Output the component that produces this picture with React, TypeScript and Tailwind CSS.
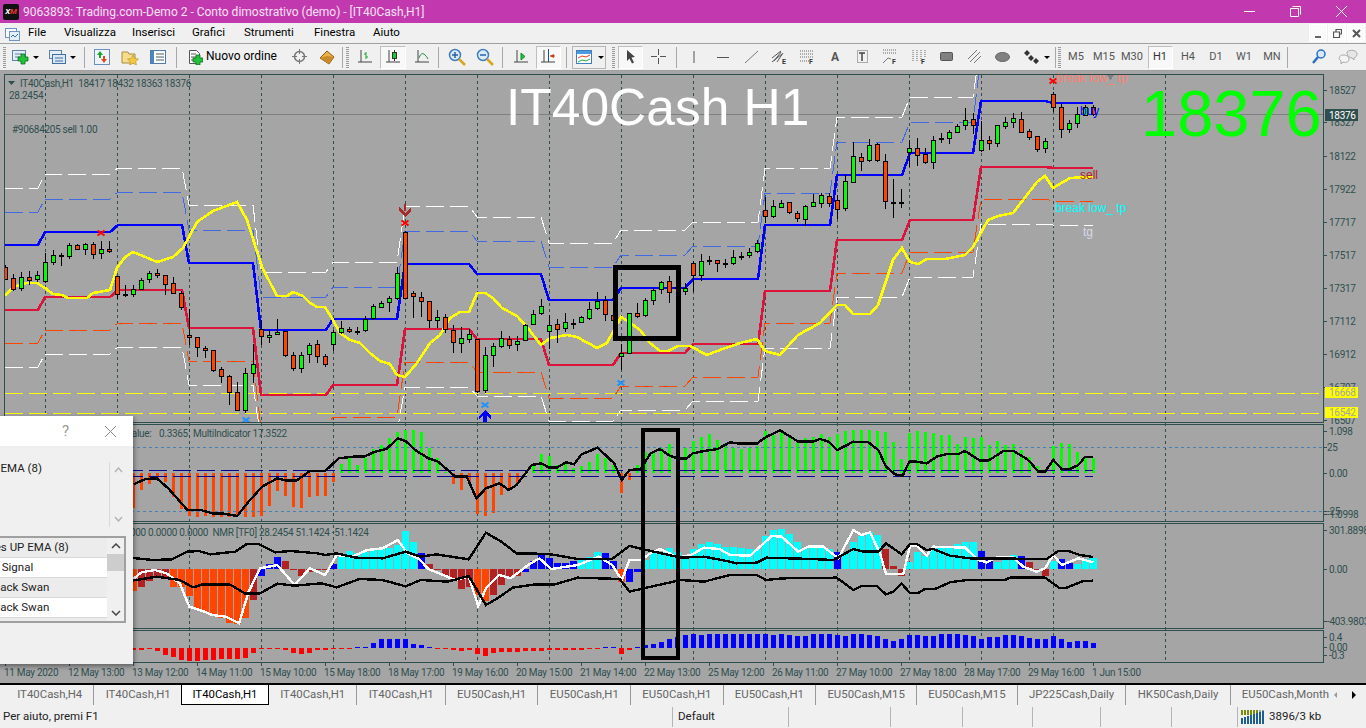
import { ReactNode } from 'react';

type Pt = [number, number];

// top, bottom, wick top, wick bottom, colour: one row per hourly bar, x = 5 + 8 * index
const candles: [number, number, number, number, string][] = [
  [267, 279, 265, 280, 'r'], [278, 289, 274, 291, 'r'], [277, 288, 272, 291, 'g'], [277, 280, 271, 285, 'r'], [275, 279, 271, 282, 'g'],
  [262, 281, 253, 283, 'g'], [255, 262, 250, 265, 'g'], [255, 256, 253, 266, 'd'], [245, 256, 243, 259, 'g'], [245, 249, 244, 250, 'r'],
  [244, 249, 243, 255, 'g'], [244, 254, 242, 259, 'r'], [249, 253, 241, 259, 'g'], [249, 251, 241, 253, 'r'], [276, 294, 276, 299, 'r'],
  [294, 295, 285, 297, 'd'], [289, 294, 285, 297, 'g'], [280, 289, 278, 290, 'g'], [273, 279, 271, 283, 'g'], [273, 275, 269, 278, 'r'],
  [275, 284, 275, 295, 'r'], [283, 293, 277, 294, 'r'], [293, 307, 291, 310, 'r'], [335, 337, 309, 345, 'r'], [337, 347, 337, 357, 'r'],
  [348, 350, 346, 358, 'r'], [350, 370, 350, 372, 'r'], [369, 376, 367, 383, 'r'], [376, 392, 375, 405, 'r'], [392, 410, 382, 411, 'r'],
  [373, 410, 368, 413, 'g'], [364, 373, 344, 383, 'g'], [329, 336, 320, 345, 'r'], [335, 337, 330, 343, 'g'], [332, 334, 319, 335, 'g'],
  [331, 355, 331, 357, 'r'], [355, 368, 352, 371, 'r'], [355, 368, 352, 373, 'g'], [345, 354, 343, 363, 'g'], [344, 356, 340, 363, 'r'],
  [356, 364, 354, 367, 'r'], [332, 344, 330, 351, 'g'], [328, 332, 321, 334, 'g'], [329, 331, 327, 333, 'r'], [331, 332, 327, 335, 'd'],
  [319, 330, 316, 332, 'g'], [306, 318, 304, 320, 'g'], [303, 307, 301, 308, 'g'], [298, 302, 296, 312, 'g'], [273, 298, 267, 300, 'g'],
  [232, 298, 231, 299, 'r'], [293, 296, 291, 318, 'r'], [297, 301, 292, 317, 'r'], [301, 320, 301, 328, 'r'], [317, 320, 310, 328, 'g'],
  [317, 329, 314, 333, 'r'], [330, 342, 325, 353, 'r'], [338, 343, 327, 353, 'g'], [334, 339, 329, 343, 'g'], [339, 391, 339, 393, 'r'],
  [355, 390, 347, 393, 'g'], [346, 355, 343, 367, 'g'], [338, 346, 331, 348, 'g'], [339, 345, 336, 349, 'r'], [341, 344, 336, 351, 'g'],
  [325, 340, 324, 341, 'g'], [314, 324, 310, 325, 'g'], [306, 313, 299, 315, 'g'], [325, 331, 315, 349, 'g'], [324, 329, 319, 343, 'r'],
  [322, 328, 313, 332, 'g'], [323, 324, 319, 329, 'd'], [317, 322, 316, 323, 'g'], [309, 318, 302, 320, 'g'], [301, 308, 292, 310, 'g'],
  [300, 314, 296, 321, 'r'], [315, 320, 310, 323, 'r'], [353, 356, 344, 370, 'g'], [313, 353, 313, 354, 'g'], [313, 316, 303, 318, 'r'],
  [300, 315, 298, 317, 'g'], [290, 300, 288, 305, 'g'], [282, 289, 281, 294, 'g'], [281, 292, 276, 303, 'r'], [287, 288, 285, 291, 'g'],
  [288, 291, 283, 295, 'g'], [263, 275, 261, 292, 'r'], [261, 275, 254, 281, 'g'], [260, 261, 256, 265, 'd'], [260, 263, 260, 272, 'r'],
  [263, 264, 259, 268, 'd'], [257, 263, 250, 265, 'g'], [256, 257, 252, 260, 'd'], [252, 255, 248, 258, 'g'], [243, 251, 240, 253, 'g'],
  [210, 216, 197, 223, 'r'], [206, 216, 200, 218, 'g'], [203, 207, 200, 208, 'g'], [202, 212, 202, 214, 'r'], [213, 218, 211, 222, 'r'],
  [206, 219, 205, 226, 'g'], [202, 206, 194, 206, 'g'], [195, 203, 193, 208, 'g'], [196, 203, 193, 207, 'r'], [200, 209, 195, 219, 'r'],
  [181, 208, 175, 211, 'g'], [156, 182, 142, 182, 'g'], [157, 161, 153, 171, 'r'], [145, 160, 139, 162, 'g'], [144, 160, 143, 162, 'r'],
  [161, 201, 154, 209, 'r'], [202, 203, 179, 218, 'd'], [202, 203, 189, 208, 'd'], [148, 152, 140, 167, 'g'], [148, 155, 138, 166, 'r'],
  [154, 162, 148, 164, 'r'], [140, 162, 136, 169, 'g'], [138, 139, 133, 143, 'd'], [132, 138, 130, 144, 'g'], [126, 132, 124, 133, 'g'],
  [120, 125, 108, 130, 'g'], [119, 125, 113, 134, 'r'], [140, 150, 121, 152, 'g'], [140, 143, 136, 150, 'r'], [125, 143, 125, 147, 'g'],
  [122, 126, 117, 129, 'g'], [118, 122, 113, 128, 'g'], [119, 132, 112, 132, 'r'], [131, 137, 129, 140, 'r'], [136, 149, 136, 152, 'r'],
  [141, 148, 138, 153, 'g'], [94, 107, 92, 112, 'r'], [107, 129, 104, 138, 'r'], [123, 129, 120, 133, 'g'], [114, 123, 107, 128, 'g'],
  [107, 115, 105, 116, 'g'], [107, 114, 105, 116, 'r'],
];

const segStart = [5, 45, 118, 189, 261, 333, 405, 477, 549, 621, 693, 765, 837, 910, 981, 1053];
const segEnd = [38, 110, 182, 253, 326, 397, 469, 541, 613, 685, 758, 830, 902, 973, 1045, 1093];

const blueLevel = [245, 232, 225, 263, 330, 319, 264, 274, 300, 288, 279, 225, 175, 153, 101, 103];
const redLevel = [310, 297, 290, 328, 395, 385, 329, 339, 365, 353, 344, 291, 240, 220, 167, 168];
const whiteTop = [188, 174, 168, 205, 272, 262, 206, 217, 243, 230, 222, 168, 117, 97, 40, 42];
const blueTop = [212, 199, 192, 230, 297, 287, 231, 241, 267, 255, 246, 193, 142, 122, 55, 56];
const orangeLow = [343, 330, 323, 361, 428, 417, 362, 372, 398, 386, 377, 323, 273, 252, 199, 201];
const whiteLow = [367, 354, 347, 385, 440, 432, 387, 396, 421, 410, 401, 348, 297, 277, 224, 225];

const yellowLine: Pt[] = [
  [5, 296], [13, 287], [27, 283], [37, 283], [45, 288], [53, 294], [62, 295], [68, 298], [87, 298], [93, 293], [110, 290], [117, 268],
  [125, 257], [133, 252], [143, 256], [157, 262], [173, 257], [183, 248], [197, 222], [213, 211], [237, 202], [247, 220], [262, 267],
  [277, 296], [287, 296], [293, 292], [303, 296], [310, 303], [317, 307], [325, 307], [333, 320], [340, 333], [350, 340], [360, 343],
  [370, 353], [380, 361], [390, 364], [397, 375], [405, 377], [417, 363], [430, 343], [440, 335], [450, 318], [460, 312], [469, 312],
  [477, 293], [485, 293], [493, 298], [502, 308], [517, 316], [527, 327], [541, 345], [550, 338], [567, 335], [577, 337], [597, 348],
  [607, 343], [621, 317], [629, 322], [640, 330], [650, 343], [660, 351], [668, 351], [678, 346], [690, 346], [707, 355], [720, 350],
  [740, 343], [757, 339], [765, 351], [780, 355], [798, 335], [820, 323], [837, 305], [845, 305], [853, 314], [870, 314], [878, 305],
  [893, 260], [902, 248], [910, 262], [918, 264], [927, 259], [945, 259], [965, 255], [973, 247], [988, 220], [998, 216], [1013, 213],
  [1037, 182], [1045, 176], [1053, 188], [1070, 178], [1093, 177],
];

// pane lines were read off two crops, so they keep the crop's own coordinates
const left = (pts: Pt[]): Pt[] => pts.map(([x, y]) => [130 + x / 2.613, 425 + y / 3]);
const right = (pts: Pt[]): Pt[] => pts.map(([x, y]) => [730 + x / 3, 425 + y / 3]);

const rsiLine = [
  ...left([[10, 178], [40, 162], [70, 160], [100, 190], [150, 255], [185, 255], [215, 265], [240, 265], [280, 273], [310, 230], [345, 185], [385, 160], [410, 167], [435, 167], [470, 138], [510, 138], [545, 100], [585, 95], [612, 95], [640, 80], [670, 72], [700, 40], [720, 48], [745, 75], [780, 100], [805, 110], [850, 155], [880, 155], [905, 220], [930, 190], [965, 175], [990, 195], [1010, 180], [1050, 120], [1075, 115], [1095, 128], [1115, 128], [1140, 112], [1160, 118], [1180, 88], [1222, 68], [1265, 115], [1285, 165], [1305, 135], [1335, 132], [1360, 85], [1385, 72], [1410, 92], [1430, 100], [1455, 100], [1470, 85], [1500, 78], [1535, 72]]),
  ...right([[0, 52], [30, 56], [80, 56], [110, 35], [150, 16], [205, 50], [250, 50], [270, 42], [295, 50], [322, 75], [370, 50], [415, 52], [445, 75], [468, 125], [495, 148], [518, 152], [538, 110], [560, 110], [590, 115], [620, 95], [650, 87], [685, 87], [705, 78], [750, 107], [775, 107], [820, 78], [850, 78], [895, 105], [925, 140], [945, 140], [970, 105], [995, 132], [1020, 132], [1045, 120], [1065, 96], [1090, 96]]),
];
const bandTop = [
  ...left([[0, 398], [60, 405], [110, 403], [150, 380], [180, 378], [210, 388], [275, 380], [305, 357], [335, 357], [380, 382], [420, 378], [490, 385], [510, 390], [540, 385], [590, 398], [660, 400], [720, 380], [760, 395], [800, 388], [885, 403], [930, 323], [970, 350], [1010, 385], [1040, 385], [1100, 388], [1170, 402], [1260, 402], [1305, 363], [1350, 375], [1440, 398], [1500, 395]]),
  ...right([[0, 410], [20, 415], [80, 413], [110, 398], [245, 402], [310, 405], [370, 372], [400, 380], [445, 380], [468, 355], [515, 388], [540, 357], [560, 357], [590, 375], [610, 372], [660, 392], [720, 400], [830, 400], [880, 402], [950, 402], [985, 378], [1015, 378], [1050, 390], [1090, 396]]),
];
const bandLow = [
  ...left([[0, 468], [70, 455], [130, 465], [165, 487], [190, 478], [260, 478], [300, 505], [340, 505], [385, 476], [430, 482], [500, 475], [540, 487], [600, 462], [660, 465], [720, 484], [760, 465], [830, 470], [885, 453], [930, 540], [960, 520], [1000, 488], [1060, 478], [1110, 478], [1170, 458], [1280, 462], [1305, 500], [1350, 488], [1440, 465], [1500, 470]]),
  ...right([[0, 450], [80, 450], [108, 465], [160, 460], [320, 458], [370, 495], [395, 483], [440, 483], [468, 508], [490, 500], [515, 476], [540, 504], [565, 504], [585, 492], [615, 492], [660, 472], [710, 465], [825, 465], [840, 458], [945, 458], [990, 490], [1010, 488], [1060, 468], [1090, 467]]),
];
const signalLine = [
  ...left([[0, 470], [30, 442], [65, 435], [95, 445], [130, 475], [155, 545], [190, 558], [215, 570], [250, 575], [285, 595], [310, 500], [340, 430], [385, 420], [430, 480], [470, 430], [510, 450], [540, 390], [580, 395], [620, 375], [660, 370], [700, 345], [725, 385], [755, 402], [780, 432], [850, 465], [885, 455], [910, 543], [930, 490], [965, 450], [995, 460], [1040, 420], [1070, 400], [1100, 432], [1170, 420], [1225, 395], [1260, 420], [1285, 465], [1305, 405], [1335, 405], [1360, 385], [1385, 372], [1410, 385], [1430, 398], [1465, 390], [1500, 368], [1540, 372]]),
  ...right([[0, 390], [60, 392], [90, 365], [125, 333], [155, 335], [205, 380], [235, 365], [280, 365], [325, 400], [370, 315], [395, 330], [420, 322], [450, 385], [468, 447], [520, 447], [540, 362], [560, 362], [590, 392], [610, 365], [705, 368], [745, 405], [770, 412], [800, 398], [850, 398], [880, 425], [920, 440], [945, 430], [970, 390], [995, 420], [1045, 400], [1090, 412]]),
];

// the three lower panes start at x = 133, the first bar not hidden by the dialog
const firstBar = 133;
const macdBars = [
  508, 490, 484, 478, 482, 497, 509, 516, 517, 516, 517, 517, 517, 516, 517, 517, 516, 506, 491, 496, 507, 508, 497, 496, 496, 482,
  464, 458, 465, 458, 449, 445, 438, 432, 430, 430, 432, 448, 458, 472,
  484, 490, 484, 514, 516, 513, 495, 490, 484, 475,
  464, 454, 456, 465, 463, 468, 466, 462, 454, 458, 465,
  493, 480,
  465, 452, 451, 448, 444, 446, 448, 441, 437, 434, 440, 443,
  448, 449, 448, 446, 431, 435, 431, 437, 442, 438, 437, 434, 437, 434, 431, 430, 430, 430, 431, 432, 442, 459, 433, 431, 432, 433, 435, 435, 444, 437, 438, 437, 445, 441, 445, 444, 450, 457, 466, 469, 446, 443, 444, 452, 458, 458,
];
const histoKinds =
  'offffoooooooooofbbbffffffb' +
  'ccccccccccbffffffooffffbbbbbbbcccbbobbccccccccccc' +
  'cccccccccccccbcccccfffcccccccccbbcccbfffcbbccc';
const histoBars = [
  591, 587, 581, 578, 578, 587, 587, 596, 610, 612, 616, 618, 623, 624, 618, 600, 576, 564, 557, 561, 570, 576, 572, 570, 570, 564,
  557, 551, 553, 552, 549, 549, 548, 545, 531, 542, 553, 564, 570, 576, 580, 589, 587, 595, 601, 595, 585, 578, 576, 572, 561, 555, 558, 563, 563, 561, 560, 557, 552, 553, 561, 582, 582, 572, 560, 553, 552, 548, 552, 555, 549, 544, 542, 544, 547,
  547, 548, 549, 549, 536, 530, 529, 534, 542, 548, 548, 548, 549, 552, 553, 542, 536, 532, 535, 549, 566, 576, 562, 552, 556, 548, 547, 547, 544, 542, 542, 551, 560, 562, 558, 555, 556, 562, 571, 576, 561, 559, 563, 564, 559, 558,
];
const momentumBars = [
  -2, -2, -1, -3, -7, -9, -12, -13, -13, -12, -12, -11, -11, -11, -10, -5, -1,
  -1, -1, -2, -5, -6, -5, -2, -2, -1, -1, -1, 1, 1, 5, 9, 9, 9, 9, 4, 3, 1, -1, -1, -2, -3, -2, -6, -8, -5, -4, -4, -4, -3, -3, -3, -2, -2, -2, -2, -2, -1, -1, 1, 1, -6, -2, 1, 3, 4, 6, 9, 11, 13, 14, 13, 14, 14, 14,
  14, 14, 14, 14, 14, 13, 14, 13, 12, 12, 14, 14, 14, 13, 12, 14, 14, 13, 12, 9, 7, 9, 13, 13, 12, 12, 14, 14, 14, 13, 12, 9, 11, 11, 13, 13, 12, 10, 9, 9, 12, 9, 6, 7, 7, 5,
];

const histoColor: Record<string, string> = { o: '#ff4500', f: '#b22222', b: '#0000ff', c: '#00ffff' };
const bodyColor: Record<string, string> = { g: '#00ff00', r: '#ff4500', d: '#000000' };

const priceLabels: [string, number][] = [
  ['18527', 90], ['18327', 122], ['18122', 156], ['17922', 189], ['17717', 222], ['17517', 255], ['17317', 288], ['17112', 321], ['16912', 354], ['16707', 387], ['16507', 420],
  ['1.098', 431], ['25', 447], ['0.00', 473], ['-25', 511], ['-1.0998', 514],
  ['301.8898', 530], ['0.00', 569], ['-403.9803', 621],
  ['0.4', 637], ['0.00', 647], ['-0.3', 655],
];
const timeLabels = ['11 May 2020', '12 May 13:00', '13 May 12:00', '14 May 11:00', '15 May 10:00', '15 May 18:00', '18 May 17:00', '19 May 16:00', '20 May 15:00', '21 May 14:00', '22 May 13:00', '25 May 12:00', '26 May 11:00', '27 May 10:00', '27 May 18:00', '28 May 17:00', '29 May 16:00', '1 Jun 15:00'];
const gridX = [45, 117, 189, 261, 333, 405, 477, 549, 621, 693, 765, 837, 909, 981, 1053, 1165];

const toPoints = (pts: Pt[]) => pts.map(([x, y]) => `${x},${y}`).join(' ');
const levelPoints = (values: number[]): Pt[] => values.flatMap((v, k): Pt[] => [[segStart[k], v], [segEnd[k], v]]);

function Cross({ x, y, color }: { x: number; y: number; color: string }) {
  return <path d={`M${x - 3.5} ${y - 2.5}L${x + 3.5} ${y + 2.5}M${x + 3.5} ${y - 2.5}L${x - 3.5} ${y + 2.5}`} stroke={color} strokeWidth={2} fill="none" shapeRendering="geometricPrecision" />;
}

function Chart() {
  return (
    <svg viewBox="0 71 1366 612" className="block w-[1366px] h-[612px]" shapeRendering="crispEdges">
      <defs>
        <clipPath id="main"><rect x={5} y={75} width={1318} height={347} /></clipPath>
        <clipPath id="pane3"><rect x={5} y={524} width={1318} height={104} /></clipPath>
      </defs>
      <rect x={0} y={71} width={1366} height={612} fill="#a5a5a5" />

      {gridX.map((x) => (
        <line key={x} x1={x + 0.5} x2={x + 0.5} y1={75} y2={662} stroke="#2f4f4f" strokeDasharray="3 3" />
      ))}
      <line x1={5} x2={1323} y1={114.5} y2={114.5} stroke="#7f7f7f" />

      <g clipPath="url(#main)" fill="none">
        {[393.5, 413.5].map((y) => <line key={y} x1={5} x2={1323} y1={y} y2={y} stroke="#ffff00" strokeDasharray="18 6" />)}
        <polyline points={toPoints(levelPoints(whiteTop))} stroke="#ffffff" strokeDasharray="18 6" />
        <polyline points={toPoints(levelPoints(blueTop))} stroke="#4169e1" strokeDasharray="18 6" />
        <polyline points={toPoints(levelPoints(orangeLow))} stroke="#ff4500" strokeDasharray="18 6" />
        <polyline points={toPoints(levelPoints(whiteLow))} stroke="#ffffff" strokeDasharray="18 6" />
        <polyline points={toPoints(levelPoints(blueLevel))} stroke="#0000ff" strokeWidth={2.6} />
        <polyline points={toPoints(levelPoints(redLevel))} stroke="#dc143c" strokeWidth={2.6} />
        <polyline points={toPoints(yellowLine)} stroke="#ffff00" strokeWidth={2.6} />
      </g>

      <g clipPath="url(#main)">
        {candles.map(([top, bottom, wickTop, wickBottom, kind], i) => {
          const x = 5 + 8 * i;
          return (
            <g key={i}>
              <line x1={x + 0.5} x2={x + 0.5} y1={wickTop} y2={wickBottom} stroke="#000" />
              <rect x={x - 1.5} y={top + 0.5} width={4} height={bottom - top} fill={bodyColor[kind]} stroke="#000" />
            </g>
          );
        })}
        <Cross x={101} y={233} color="#ff0000" />
        <Cross x={405} y={223} color="#ff0000" />
        <Cross x={1053} y={81} color="#ff0000" />
        <Cross x={485} y={405} color="#1e90ff" />
        <Cross x={621} y={383} color="#1e90ff" />
        <Cross x={246} y={420} color="#1e90ff" />
        <path d="M404 204h2v7h-2zM399 207l6 6 6-6v4l-6 6-6-6z" fill="#a52a2a" />
        <path d="M485 410l6 6v3l-4-3v6h-4v-6l-4 3v-3z" fill="#0000ff" />
      </g>

      <g className="font-['Liberation_Sans',sans-serif]" shapeRendering="auto">
        <text x={506} y={125} className="text-[51.500px] fill-white">IT40Cash H1</text>
        <text x={1141} y={136} className="text-[65px] fill-[#00ff00]">18376</text>
        <text x={1056} y={82} className="text-[12px] fill-[#fa8072]">break low_ tp</text>
        <text x={1080} y={115} className="text-[12px] fill-[#0000ff]">buy</text>
        <text x={1080} y={179} className="text-[12px] fill-[#b22222]">sell</text>
        <text x={1055} y={212} className="text-[12px] fill-[#00ffff]">break low_ tp</text>
        <text x={1083} y={236} className="text-[12px] fill-[#d8d8e8]">tg</text>
      </g>
      <path d="M1106 74h9l-4.500 6z" fill="#808080" />

      {/* oscillator pane */}
      <g>
        {macdBars.map((y, i) => (
          <rect key={i} x={firstBar + 8 * i - 1} y={Math.min(y, 473)} width={3} height={Math.abs(y - 473)} fill={y === 475 ? '#ffff00' : y < 473 ? '#00ff00' : '#ff4500'} />
        ))}
        {[447.5, 511.5].map((y) => <line key={y} x1={5} x2={1323} y1={y} y2={y} stroke="#4682b4" strokeDasharray="3 3" />)}
        {[470.5, 476.5].map((y) => <line key={y} x1={5} x2={1093} y1={y} y2={y} stroke="#00008b" strokeDasharray="18 6" />)}
        <polyline points={toPoints(rsiLine)} fill="none" stroke="#000" strokeWidth={2.4} />
      </g>

      {/* histogram pane */}
      <g clipPath="url(#pane3)" fill="none">
        {histoBars.map((y, i) => (
          <rect key={i} x={firstBar + 8 * i - 3} y={Math.min(y, 569)} width={7} height={Math.abs(y - 569)} fill={histoColor[histoKinds[i]]} />
        ))}
        <polyline points={toPoints(signalLine)} stroke="#ffffff" strokeWidth={2.4} />
        <polyline points={toPoints(bandTop)} stroke="#000" strokeWidth={2.4} />
        <polyline points={toPoints(bandLow)} stroke="#000" strokeWidth={2.4} />
      </g>

      {/* momentum pane */}
      {momentumBars.map((d, i) => (
        <rect key={i} x={firstBar + 8 * i - 2} y={d > 0 ? 648 - d : 648} width={5} height={Math.abs(d)} fill={d > 0 ? '#0000ff' : '#ff0000'} />
      ))}

      {/* frames and axes */}
      <g fill="none" stroke="#2f4f4f">
        <rect x={4.5} y={74.5} width={1319} height={348} />
        <rect x={4.5} y={424.5} width={1319} height={97} />
        <rect x={4.5} y={523.5} width={1319} height={105} />
        <rect x={4.5} y={630.5} width={1319} height={32} />
        {priceLabels.map(([, y], i) => <line key={i} x1={1324} x2={1327} y1={y + 0.5} y2={y + 0.5} />)}
        {timeLabels.map((_, i) => <line key={i} x1={5.5 + 64 * i} x2={5.5 + 64 * i} y1={662} y2={666} />)}
      </g>

      <rect x={615.5} y={267.5} width={63} height={71} fill="none" stroke="#000" strokeWidth={5} />
      <rect x={643} y={430} width={35} height={228} fill="none" stroke="#000" strokeWidth={4} />

      <g className="font-['Roboto',sans-serif] text-[10px] tracking-[-0.3px] fill-[#2f4f4f]" shapeRendering="auto">
        <path d="M8 81h7l-3.500 4z" />
        <text x={20} y={87}>IT40Cash,H1&nbsp;&nbsp;18417 18432 18363 18376</text>
        <text x={9} y={99}>28.2454</text>
        <text x={12} y={133}>#90684205 sell 1.00</text>
        <text x={126} y={437}>Value:</text>
        <text x={159} y={437}>0.3365</text>
        <text x={193} y={437}>MultiIndicator 17.3522</text>
        <text x={117} y={536}>0.0000 0.0000 0.0000&nbsp;&nbsp;NMR [TF0] 28.2454 51.1424 -51.1424</text>
        {priceLabels.map(([label, y], i) => (
          <text key={i} x={label === '25' || label === '-25' || label === '-1.0998' || label === '-403.9803' ? 1327 : 1329} y={y + 4}>{label}</text>
        ))}
        {timeLabels.map((label, i) => <text key={i} x={4 + 64 * i} y={676}>{label}</text>)}
        <rect x={1325} y={109} width={33} height={12} fill="#2f4f4f" shapeRendering="crispEdges" />
        <text x={1329} y={119} className="fill-white">18376</text>
        <rect x={1325} y={387} width={33} height={11} fill="#ffff00" shapeRendering="crispEdges" />
        <text x={1329} y={396} className="fill-[#a5a5a5]">16668</text>
        <rect x={1325} y={407} width={33} height={11} fill="#ffff00" shapeRendering="crispEdges" />
        <text x={1329} y={416} className="fill-[#a5a5a5]">16542</text>
      </g>
    </svg>
  );
}

function Icon({ w, h = 16, className = '', children }: { w: number; h?: number; className?: string; children: ReactNode }) {
  return <svg width={w} height={h} viewBox={`0 0 ${w} ${h}`} className={`shrink-0 ${className}`}>{children}</svg>;
}

const Sep = ({ className }: { className: string }) => <div className={`w-px h-[21px] bg-[#a8a8a8] shrink-0 ${className}`} />;
const Grip = ({ className }: { className: string }) => <div className={`w-[3px] h-[21px] shrink-0 border-y-0 bg-[repeating-linear-gradient(to_bottom,#9a9a9a_0,#9a9a9a_1px,transparent_1px,transparent_2px)] ${className}`} />;
const Drop = ({ className }: { className: string }) => <div className={`w-0 h-0 shrink-0 border-x-[3px] border-x-transparent border-t-[3px] border-t-black ${className}`} />;
const Active = ({ className, children }: { className: string; children: ReactNode }) => (
  <div className={`h-[23px] shrink-0 flex items-center justify-center border border-[#bfbfbf] border-r-white border-b-white bg-[#f8f8f8] ${className}`}>{children}</div>
);

const GreenPlus = ({ x, y }: { x: number; y: number }) => (
  <path d={`M${x + 3} ${y}h4v3h3v4h-3v3h-4v-3h-3v-4h3z`} fill="#22c33a" stroke="#0f6b1c" strokeWidth={0.8} />
);
const Axes = () => <path d="M3 1v12M0 13h14" stroke="#444" fill="none" />;

function Toolbar() {
  return (
    <div className="h-[26px] flex items-center bg-[#f0f0f0] pl-[3px] text-[12px] text-black">
      <Grip className="" />
      <Icon w={18} className="ml-[5px]"><rect x={1.500} y={1.500} width={13} height={10} fill="#e4ecf5" stroke="#5f83a8" /><path d="M4 5h7M4 8h5" stroke="#5f83a8" /><GreenPlus x={7} y={5} /></Icon>
      <Drop className="ml-[4px]" />
      <Icon w={18} className="ml-[9px]"><rect x={1.500} y={1.500} width={12} height={8} fill="#e4ecf5" stroke="#5f83a8" /><rect x={4.500} y={5.500} width={13} height={9} fill="#dbe7f4" stroke="#3f6fa5" /><path d="M7 9h8M7 12h8" stroke="#3f6fa5" /></Icon>
      <Drop className="ml-[4px]" />
      <Sep className="ml-[8px]" />
      <Icon w={16} className="ml-[9px]"><rect x={0.500} y={0.500} width={15} height={15} fill="#eef3f9" stroke="#6b91b8" /><path d="M6 2l3 4h-2v3h-2v-3h-2z" fill="#1aa52c" /><path d="M10 14l-3-4h2v-3h2v3h2z" fill="#e0491b" /></Icon>
      <Icon w={18} className="ml-[11px]"><path d="M1 3h6l1 2h6v9h-13z" fill="#f6dc8c" stroke="#a98d3a" /><path d="M12 6l1.800 3.600 3.700.4-2.800 2.600.8 3.600-3.500-1.900-3.500 1.900.8-3.600-2.800-2.600 3.700-.4z" fill="#f5c93a" stroke="#a98d3a" strokeWidth={0.6} /></Icon>
      <Icon w={16} className="ml-[11px]"><rect x={0.500} y={1.500} width={15} height={13} fill="#fff" stroke="#4f7cae" /><rect x={1} y={2} width={3} height={12} fill="#4f86c6" /><path d="M6 5h8M6 8h8M6 11h8" stroke="#4a5a70" /></Icon>
      <Sep className="ml-[10px]" />
      <Icon w={16} className="ml-[10px]"><path d="M2.500 1.500h7l3 3v10h-10z" fill="#fff" stroke="#555" /><path d="M4 5h5M4 8h7M4 11h3" stroke="#555" /><GreenPlus x={6} y={6} /></Icon>
      <span className="ml-[3px] w-[73px] shrink-0 whitespace-nowrap leading-none -mt-[2px] font-['Roboto',sans-serif]">Nuovo ordine</span>
      <Icon w={15} className="ml-[13px]"><circle cx={7.500} cy={7.500} r={5} fill="none" stroke="#777" strokeWidth={1.500} /><path d="M7.500 0v5M7.500 10v5M0 7.500h5M10 7.500h5" stroke="#777" /></Icon>
      <Icon w={16} className="ml-[12px]"><path d="M1 9l7-7 7 6-5 7z" fill="#e8b14a" stroke="#8a5a14" /><path d="M1 9l9 6 5-7-7-1z" fill="#c98a2a" /></Icon>
      <Sep className="ml-[7px]" />
      <Grip className="ml-[3px]" />
      <Icon w={15} className="ml-[9px]"><Axes /><path d="M8 3v7M6 5h2M8 8h2" stroke="#1aa52c" fill="none" /></Icon>
      <Active className="w-[26px] ml-[7px]"><Icon w={15}><Axes /><path d="M8.500 1v11" stroke="#333" /><rect x={6.500} y={3.500} width={4} height={6} fill="#22c33a" stroke="#333" /></Icon></Active>
      <Icon w={14} className="ml-[9px]"><Axes /><path d="M4 9c2-6 5-6 9 1" stroke="#1e8a4a" fill="none" /></Icon>
      <Sep className="ml-[9px]" />
      <Icon w={18} h={18} className="ml-[9px]"><circle cx={7} cy={7} r={5.500} fill="#dceaf8" stroke="#3f7fbf" strokeWidth={1.500} /><path d="M4 7h6M7 4v6" stroke="#2a62a8" strokeWidth={1.500} /><path d="M11 11l6 6" stroke="#d9a520" strokeWidth={2.500} /></Icon>
      <Icon w={18} h={18} className="ml-[10px]"><circle cx={7} cy={7} r={5.500} fill="#dceaf8" stroke="#3f7fbf" strokeWidth={1.500} /><path d="M4 7h6" stroke="#2a62a8" strokeWidth={1.500} /><path d="M11 11l6 6" stroke="#d9a520" strokeWidth={2.500} /></Icon>
      <Sep className="ml-[8px]" />
      <Icon w={14} className="ml-[11px]"><Axes /><path d="M7 4l4 3.500-4 3.500z" fill="#22c33a" stroke="#1a8a2c" /></Icon>
      <Active className="w-[25px] ml-[8px]"><Icon w={15}><Axes /><path d="M7.500 0v13" stroke="#1f4f8f" /><path d="M13 5v4l-4-2z" fill="#c83a10" /><path d="M9 7h5" stroke="#c83a10" /></Icon></Active>
      <Sep className="ml-[5px]" />
      <div className="h-[23px] w-[34px] ml-[5px] shrink-0 flex items-center pl-[3px] border border-[#b5b5b5]">
        <Icon w={16}><rect x={0.500} y={1.500} width={15} height={13} fill="#fff" stroke="#3f7fbf" /><rect x={1} y={2} width={14} height={3} fill="#4a9be0" /><path d="M2 9l4-2 4 1 4-2" stroke="#d9401a" fill="none" /><path d="M2 13l4-2 4 1 4-2" stroke="#22a83a" fill="none" /></Icon>
        <Drop className="ml-[6px]" />
      </div>
      <Grip className="ml-[6px]" />
      <Active className="w-[25px] ml-[3px]"><Icon w={10}><path d="M1 1l8 7-3.500.5 2.500 5-2 1-2.500-5-2.500 2.500z" fill="#444" /></Icon></Active>
      <Icon w={15} className="ml-[8px]"><path d="M7.500 0v6M7.500 9v6M0 7.500h6M9 7.500h6" stroke="#555" /></Icon>
      <Sep className="ml-[10px]" />
      <Icon w={2} className="ml-[16px]"><path d="M1 2v12" stroke="#555" /></Icon>
      <Icon w={12} className="ml-[22px]"><path d="M0 8.500h12" stroke="#555" /></Icon>
      <Icon w={13} className="ml-[16px]"><path d="M0 14l13-12" stroke="#777" /></Icon>
      <Icon w={16} className="ml-[13px]"><path d="M1 9l9-7M1 13l10-8M3 12l7-9M6 13l6-9" stroke="#555" fill="none" /><text x={11} y={15} className="text-[7px] font-bold fill-[#333] font-['Roboto',sans-serif]">E</text></Icon>
      <Icon w={13} className="ml-[13px]"><path d="M0 2h13M0 5h13M0 8h13M0 12h9" stroke="#666" strokeDasharray="1 1" /><text x={9} y={15} className="text-[7px] font-bold fill-[#333] font-['Roboto',sans-serif]">F</text></Icon>
      <span className="ml-[18px] w-[8px] shrink-0 text-[12px] font-bold leading-none text-[#555] font-['Roboto',sans-serif]">A</span>
      <Icon w={12} className="ml-[17px]"><rect x={1.500} y={1.500} width={10} height={12} fill="none" stroke="#666" strokeDasharray="1 1" /><path d="M3 4h6M6 4v8" stroke="#444" strokeWidth={1.500} /></Icon>
      <Icon w={14} className="ml-[15px]"><path d="M0 1h14M0 4h14" stroke="#666" strokeDasharray="1 1" /><path d="M0 14l5-5 3 1" stroke="#777" fill="none" /><text x={9} y={15} className="text-[7px] font-bold fill-[#333] font-['Roboto',sans-serif]">F</text></Icon>
      <Icon w={14} className="ml-[15px]"><path d="M1 1v12M5 1v12M9 1v12M13 1v8" stroke="#666" strokeDasharray="1 1" /><text x={9} y={15} className="text-[7px] font-bold fill-[#333] font-['Roboto',sans-serif]">F</text></Icon>
      <Icon w={13} className="ml-[14px]"><rect x={0.500} y={3.500} width={12} height={8} rx={1} fill="#808080" stroke="#555" /></Icon>
      <Icon w={13} className="ml-[15px]"><path d="M0 10l9-9M2 13l10-10M6 14l7-7" stroke="#777" /></Icon>
      <Icon w={15} className="ml-[14px]"><ellipse cx={7.500} cy={8} rx={7} ry={4.500} fill="#808080" stroke="#666" /></Icon>
      <Icon w={16} className="ml-[14px]"><path d="M3 1l3 3-3 3-3-3zM7 6l3 3-3 3-3-3zM12 9l3 3-3 3-3-3z" fill="#333" /></Icon>
      <Drop className="ml-[4px]" />
      <Sep className="ml-[5px]" />
      <Grip className="ml-[2px]" />
      <div className="ml-px flex items-center text-[11px] text-[#555] font-['Roboto',sans-serif]">
        {['M5', 'M15', 'M30'].map((p) => <div key={p} className="w-[28px] text-center">{p}</div>)}
        <Active className="w-[25px] mx-[1.500px] text-[#333]">H1</Active>
        {['H4', 'D1', 'W1', 'MN'].map((p) => <div key={p} className="w-[28px] text-center">{p}</div>)}
      </div>
      <Sep className="ml-px" />
      <Icon w={14} className="ml-[24px]"><circle cx={9} cy={5} r={4} fill="#d8e8f8" stroke="#2a6fc0" strokeWidth={1.500} /><path d="M6 8l-5 6" stroke="#2a6fc0" strokeWidth={2.500} /></Icon>
      <Icon w={20} className="ml-[12px]"><path d="M9 3c3-3 10-2 10 2 0 2-1 3-3 4v2l-2-2c-3 0-5-3-5-6z" fill="#e6e6e6" stroke="#aaa" /><path d="M5 6c3 0 6 1 6 4s-3 4-6 3l-2 2v-3c-3-2-2-6 2-6z" fill="#f4f4f4" stroke="#aaa" /></Icon>
    </div>
  );
}

const tabs = ['IT40Cash,H4', 'IT40Cash,H1', 'IT40Cash,H1', 'IT40Cash,H1', 'IT40Cash,H1', 'EU50Cash,H1', 'EU50Cash,H1', 'EU50Cash,H1', 'EU50Cash,H1', 'EU50Cash,M15', 'EU50Cash,M15', 'JP225Cash,Daily', 'HK50Cash,Daily', 'EU50Cash,Month'];

const menu: [string, string][] = [['File', 'w-[36px]'], ['Visualizza', 'w-[68px]'], ['Inserisci', 'w-[60px]'], ['Grafici', 'w-[52px]'], ['Strumenti', 'w-[70px]'], ['Finestra', 'w-[59px]'], ['Aiuto', 'w-[40px]']];

const listRows: [string, string][] = [['Closes UP EMA (8)', 'pl-[10px] bg-[#ececec]'], ['Close Signal', 'pl-[8px] bg-white'], ['Sell Black Swan', 'pl-[7px] bg-[#ececec]'], ['Sell Black Swan', 'pl-[7px] bg-white'], ['', 'bg-[#ececec]']];

function Dialog() {
  return (
    <div className="absolute left-[-40px] top-[345px] w-[173px] h-[248px] bg-[#f0f0f0] shadow-[1px_2px_5px_rgba(0,0,0,0.45)] overflow-hidden text-[11.500px] text-[#222] font-['Roboto',sans-serif]">
      <div className="h-[30px] bg-white flex items-center justify-end pr-[17px] text-[#999]">
        <span className="text-[15px] mr-[36px]">?</span>
        <Icon w={11} h={11}><path d="M0 0l11 11M11 0l-11 11" stroke="#888" /></Icon>
      </div>
      <div className="flex h-[90px] pt-[17px] relative">
        <span className="pl-[23px] leading-none">UP EMA (8)</span>
        <div className="absolute left-[149px] top-[16px] w-[17px] h-[65px] border-l border-[#d9d9d9] flex flex-col items-center justify-between py-[5px]">
          <Icon w={9} h={6}><path d="M1 5l3.500-4 3.500 4" stroke="#b5b5b5" strokeWidth={1.500} fill="none" /></Icon>
          <Icon w={9} h={6}><path d="M1 1l3.500 4 3.500-4" stroke="#b5b5b5" strokeWidth={1.500} fill="none" /></Icon>
        </div>
      </div>
      <div className="w-[166px] h-[87px] border-2 border-[#a0a0a0] flex overflow-hidden bg-white">
        <div className="w-[145px] shrink-0">
          {listRows.map(([row, style], i) => (
            <div key={i} className={`h-[20px] flex items-center border-b border-[#d8d8d8] whitespace-nowrap ${style}`}>{row}</div>
          ))}
        </div>
        <div className="flex-1 bg-[#f0f0f0] flex flex-col items-center py-[5px]">
          <Icon w={10} h={6}><path d="M1 5l4-4 4 4" stroke="#444" strokeWidth={1.500} fill="none" /></Icon>
          <div className="w-full h-[17px] bg-[#cdcdcd] mt-[5px]" />
          <Icon w={10} h={6} className="mt-auto"><path d="M1 1l4 4 4-4" stroke="#444" strokeWidth={1.500} fill="none" /></Icon>
        </div>
      </div>
    </div>
  );
}

export default function App() {
  return (
    <div className="w-[1366px] h-[728px] overflow-hidden flex flex-col bg-[#f0f0f0] font-['Roboto',sans-serif]">
      <div className="h-[23px] bg-[#c238ae] flex items-center pl-[3px] text-white/85">
        <div className="w-[16px] h-[16px] rounded-[2px] bg-[#111] flex items-center justify-center text-[8px] font-bold italic text-white leading-none">
          X<span className="text-[#e33]">M</span>
        </div>
        <span className="ml-[4px] text-[12px] leading-none">9063893: Trading.com-Demo 2 - Conto dimostrativo (demo) - [IT40Cash,H1]</span>
        <div className="ml-auto flex items-center pr-[19px]">
          <Icon w={11} h={11}><path d="M0 5.500h11" stroke="#fff" /></Icon>
          <Icon w={11} h={11} className="ml-[35px]"><path d="M2.500.500h8v8M.500 2.500h8v8h-8z" stroke="#fff" fill="none" /></Icon>
          <Icon w={11} h={11} className="ml-[35px]"><path d="M0 0l11 11M11 0l-11 11" stroke="#fff" /></Icon>
        </div>
      </div>

      <div className="h-[21px] flex items-center border-b border-[#a0a0a0] text-[11.500px] text-black relative">
        <Icon w={15} h={15} className="ml-[5px]"><rect x={0.500} y={2.500} width={11} height={9} fill="#fff" stroke="#6f94bd" /><rect x={4.500} y={5.500} width={10} height={9} fill="#e4eef8" stroke="#6f94bd" /><path d="M6 11l2-2 2 2 3-3" stroke="#3a72b0" fill="none" /></Icon>
        <div className="ml-[8px] flex">
          {menu.map(([label, width]) => <span key={label} className={width}>{label}</span>)}
        </div>
        <div className="ml-auto flex gap-px pr-px">
          <div className="w-[18px] h-[18px] bg-white/70 border border-white flex items-end justify-center pb-[3px]"><div className="w-[6px] h-[2px] bg-[#666]" /></div>
          <div className="w-[18px] h-[18px] bg-white/70 border border-white flex items-center justify-center"><Icon w={9} h={9}><path d="M3 2.500v-2h5.500v4.500h-2M.500 3h6v5.500h-6z" stroke="#555" strokeWidth={1.200} fill="none" /></Icon></div>
          <div className="w-[18px] h-[18px] bg-white/70 border border-white flex items-center justify-center"><Icon w={9} h={9}><path d="M1 1l7 7M8 1l-7 7" stroke="#555" strokeWidth={2} /></Icon></div>
        </div>
      </div>

      <Toolbar />
      <div className="h-px bg-[#a0a0a0]" />

      <div className="relative h-[612px] overflow-hidden">
        <Chart />
        <Dialog />
      </div>

      <div className="h-[22px] border-t-2 border-black flex items-stretch pl-[6px] text-[11.400px] text-[#666] relative bg-[#f0f0f0]">
        {tabs.map((tab, i) => (
          <div key={i} className={i === 2
            ? 'px-[10.500px] flex items-center bg-white text-black border-x border-b border-black -ml-px'
            : `px-[11.200px] flex items-center whitespace-nowrap ${i === 1 || i === 13 ? '' : 'border-r border-[#999]'}`}>
            {tab}
          </div>
        ))}
        <div className="absolute right-0 top-0 h-[20px] w-[36px] bg-[#f0f0f0] flex items-center justify-between pl-[4px] pr-[10px]">
          <div className="w-0 h-0 border-y-[3px] border-y-transparent border-r-[3px] border-r-[#999]" />
          <div className="w-0 h-0 border-y-[4px] border-y-transparent border-l-[4px] border-l-black" />
        </div>
      </div>

      <div className="flex-1 flex items-center text-[11.500px] text-[#222] relative">
        <span className="pl-[3px] w-[672px] shrink-0">Per aiuto, premi F1</span>
        <span className="h-[20px] w-[116px] shrink-0 border-l border-[#b5b5b5] pl-[5px] flex items-center">Default</span>
        <div className="h-[20px] w-[102px] shrink-0 border-l border-[#b5b5b5]" />
        <div className="h-[20px] w-[72px] shrink-0 border-l border-[#b5b5b5]" />
        <div className="h-[20px] w-[70px] shrink-0 border-l border-[#b5b5b5]" />
        <div className="h-[20px] w-[68px] shrink-0 border-l border-[#b5b5b5]" />
        <div className="h-[20px] w-[71px] shrink-0 border-l border-[#b5b5b5]" />
        <div className="h-[20px] w-[66px] shrink-0 border-l border-[#b5b5b5]" />
        <div className="h-[20px] border-l border-[#b5b5b5] pl-[3px] flex items-center">
          <Icon w={24} h={15}>
            {[0, 1, 2, 3, 4, 5, 6, 7].map((k) => (
              <g key={k}>
                <rect x={k * 3} y={1} width={2} height={5} fill={k < 6 ? '#7a8a10' : '#9aa5a5'} />
                <rect x={k * 3} y={9 - k} width={2} height={6 + k} fill="#1f5f8f" />
              </g>
            ))}
          </Icon>
          <span className="ml-[4px]">3896/3 kb</span>
        </div>
      </div>
    </div>
  );
}
